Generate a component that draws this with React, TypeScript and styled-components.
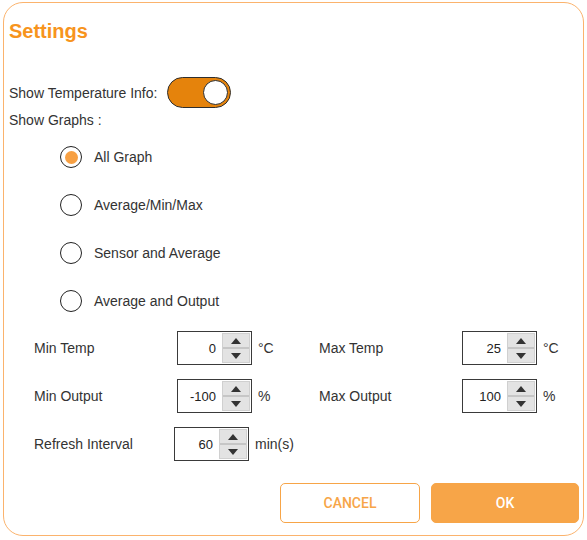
import styled, { createGlobalStyle } from 'styled-components';

const GlobalStyle = createGlobalStyle`
  html, body {
    margin: 0;
    padding: 0;
    background: #ffffff;
  }
  body {
    font-family: "Liberation Sans", Arial, sans-serif;
    font-size: 14px;
    color: #333333;
  }
`;

const Dialog = styled.div`
  box-sizing: border-box;
  width: 581px;
  height: 534px;
  margin: 2px 0 0 3px;
  border: 1px solid #fbb36d;
  border-radius: 20px;
  padding: 16px 4px 0 5px;
  display: flex;
  flex-direction: column;
`;

const Title = styled.h1`
  margin: 0;
  font-size: 20px;
  line-height: 24px;
  font-weight: bold;
  color: #f7941d;
`;

const ToggleRow = styled.div`
  display: flex;
  align-items: center;
  gap: 10px;
  margin-top: 34px;
  height: 31px;
`;

const Label = styled.span`
  line-height: 20px;
  white-space: nowrap;
`;

const Toggle = styled.div<{ $on: boolean }>`
  position: relative;
  box-sizing: border-box;
  width: 64px;
  height: 31px;
  border-radius: 16px;
  border: 1.5px solid #2e2e2e;
  background: ${(p) => (p.$on ? '#e5830c' : '#cccccc')};
`;

const Knob = styled.span<{ $on: boolean }>`
  position: absolute;
  top: 1.5px;
  ${(p) => (p.$on ? 'right: 2px;' : 'left: 2px;')}
  box-sizing: border-box;
  width: 25px;
  height: 25px;
  border-radius: 50%;
  border: 1.5px solid #2e2e2e;
  background: #ffffff;
`;

const GraphsLabel = styled.div`
  margin-top: 2px;
  line-height: 20px;
`;

const RadioList = styled.div`
  display: flex;
  flex-direction: column;
  margin-top: 3px;
  padding-left: 51px;
`;

const RadioRow = styled.label`
  display: flex;
  align-items: center;
  gap: 12px;
  height: 48px;
`;

const RadioCircle = styled.span<{ $checked: boolean }>`
  box-sizing: border-box;
  width: 22px;
  height: 22px;
  border-radius: 50%;
  border: 1.5px solid #222222;
  display: flex;
  align-items: center;
  justify-content: center;

  &::after {
    content: '';
    display: ${(p) => (p.$checked ? 'block' : 'none')};
    width: 13px;
    height: 13px;
    border-radius: 50%;
    background: #f7a043;
  }
`;

const FieldGrid = styled.div`
  display: grid;
  grid-template-columns: 285px 260px;
  row-gap: 14px;
  margin-top: 6px;
  padding-left: 25px;
`;

const Field = styled.div<{ $labelWidth: number }>`
  display: grid;
  grid-template-columns: ${(p) => p.$labelWidth}px 75px auto;
  column-gap: 6px;
  align-items: center;
  height: 34px;
`;

const NumberBox = styled.div`
  box-sizing: border-box;
  width: 75px;
  height: 34px;
  border: 1px solid #3a3a3a;
  display: flex;
  align-items: stretch;
  padding: 1px;
  background: #ffffff;
`;

const NumberValue = styled.span`
  flex: 1;
  display: flex;
  align-items: center;
  justify-content: flex-end;
  padding-right: 6px;
  font-size: 13px;
  color: #222222;
`;

const Spinner = styled.div`
  width: 28px;
  display: flex;
  flex-direction: column;
  background: #e3e3e3;
  border: 1px solid #d0d0d0;
  box-sizing: border-box;
`;

const SpinButton = styled.span<{ $down?: boolean }>`
  flex: 1;
  display: flex;
  align-items: center;
  justify-content: center;
  ${(p) => (p.$down ? 'border-top: 2px solid #c6c6c6;' : '')}

  &::before {
    content: '';
    width: 0;
    height: 0;
    border-left: 5px solid transparent;
    border-right: 5px solid transparent;
    ${(p) =>
      p.$down ? 'border-top: 6px solid #333333;' : 'border-bottom: 6px solid #333333;'}
  }
`;

const Unit = styled.span`
  line-height: 20px;
`;

const Footer = styled.div`
  display: flex;
  justify-content: flex-end;
  gap: 11px;
  margin-top: 22px;
`;

const Button = styled.button<{ $primary?: boolean }>`
  box-sizing: border-box;
  height: 40px;
  border-radius: 5px;
  font-family: Roboto, "Liberation Sans", sans-serif;
  font-weight: 500;
  font-size: 14px;
  text-transform: uppercase;
  cursor: pointer;
  border: 1px solid #f7a548;
  background: ${(p) => (p.$primary ? '#f7a548' : '#ffffff')};
  color: ${(p) => (p.$primary ? '#ffffff' : '#f7a548')};
  width: ${(p) => (p.$primary ? '148px' : '140px')};
`;

const graphs = ['All Graph', 'Average/Min/Max', 'Sensor and Average', 'Average and Output'];

const fields = [
  { label: 'Min Temp', value: '0', unit: '°C', labelWidth: 137 },
  { label: 'Max Temp', value: '25', unit: '°C', labelWidth: 137 },
  { label: 'Min Output', value: '-100', unit: '%', labelWidth: 137 },
  { label: 'Max Output', value: '100', unit: '%', labelWidth: 137 },
  { label: 'Refresh Interval', value: '60', unit: 'min(s)', labelWidth: 134 },
];

const NumberField = ({
  label,
  value,
  unit,
  labelWidth,
}: {
  label: string;
  value: string;
  unit: string;
  labelWidth: number;
}) => (
  <Field $labelWidth={labelWidth}>
    <Label>{label}</Label>
    <NumberBox>
      <NumberValue>{value}</NumberValue>
      <Spinner>
        <SpinButton />
        <SpinButton $down />
      </Spinner>
    </NumberBox>
    <Unit>{unit}</Unit>
  </Field>
);

export default function App() {
  return (
    <>
      <GlobalStyle />
      <Dialog>
        <Title>Settings</Title>
        <ToggleRow>
          <Label>Show Temperature Info:</Label>
          <Toggle $on>
            <Knob $on />
          </Toggle>
        </ToggleRow>
        <GraphsLabel>Show Graphs :</GraphsLabel>
        <RadioList>
          {graphs.map((g, i) => (
            <RadioRow key={g}>
              <RadioCircle $checked={i === 0} />
              <Label>{g}</Label>
            </RadioRow>
          ))}
        </RadioList>
        <FieldGrid>
          {fields.map((f) => (
            <NumberField key={f.label} {...f} />
          ))}
        </FieldGrid>
        <Footer>
          <Button>Cancel</Button>
          <Button $primary>OK</Button>
        </Footer>
      </Dialog>
    </>
  );
}
